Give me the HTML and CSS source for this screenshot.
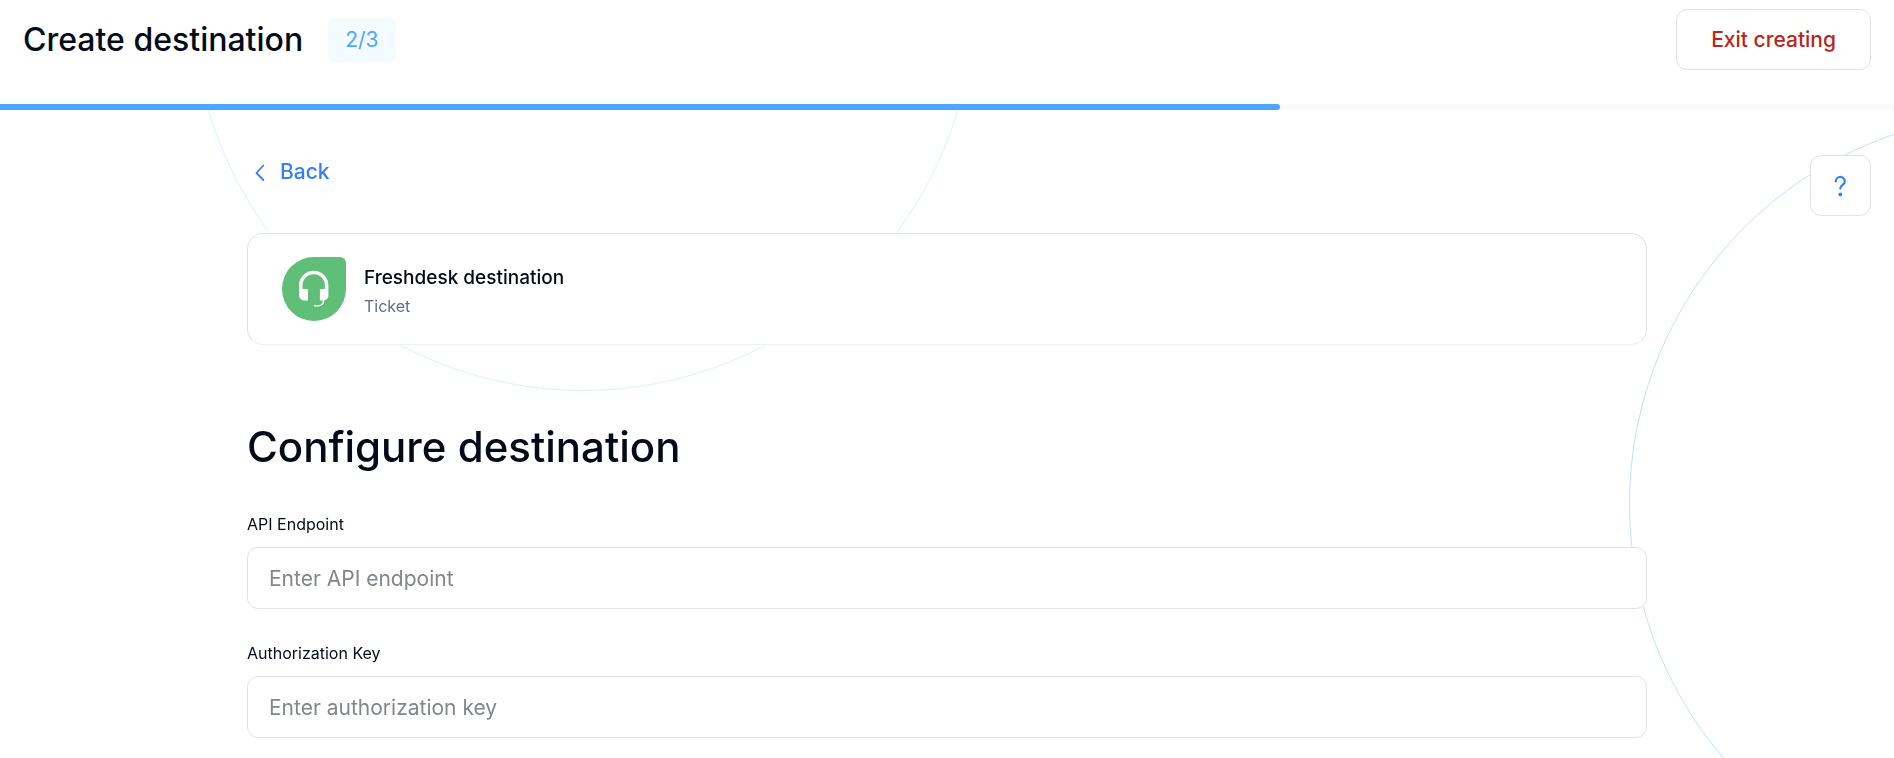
FILE: index.html
```
<!DOCTYPE html>
<html lang="en">
<head>
    <meta charset="UTF-8">
    <meta name="viewport" content="width=device-width, initial-scale=1.0">
    <title>Create destination</title>
    <link rel="stylesheet" href="styles.css">
</head>
<body>
    <header class="topbar">
        <h1>Create destination</h1>
        <span class="step">2/3</span>
        <button type="button" class="btn exit-btn">Exit creating</button>
    </header>
    <div class="progress" role="progressbar" aria-label="Step 2 of 3" aria-valuemin="0" aria-valuemax="3" aria-valuenow="2">
        <div class="progress-bar"></div>
    </div>

    <div class="circle circle-left"></div>
    <div class="circle circle-right"></div>

    <button type="button" class="btn help-btn" aria-label="Help">
        <svg width="24" height="24" viewBox="0 0 24 24" fill="none" stroke="currentColor" stroke-width="2.2" stroke-linecap="round">
            <path d="M6.800 7.400a4.500 4.500 0 0 1 9 0c0 3.200-4.500 3.800-4.500 7.200"/>
            <circle cx="11.300" cy="20.500" r="1.900" fill="currentColor" stroke="none"/>
        </svg>
    </button>

    <main class="container">
        <a href="#" class="back">
            <svg width="10" height="18" viewBox="0 0 10 18" fill="none" stroke="currentColor" stroke-width="1.8" stroke-linecap="round" stroke-linejoin="round">
                <path d="M8.300 2.500 1.500 10l6.800 7"/>
            </svg>
            Back
        </a>

        <section class="card">
            <svg class="logo" width="64" height="64" viewBox="0 0 64 64">
                <path fill="#5fbf78" d="M32 0h26a6 6 0 0 1 6 6v26A32 32 0 1 1 32 0z"/>
                <path fill="#fff" d="M17 28.500a14.700 14.700 0 0 1 29.400 0V38a5.500 5.500 0 0 1-4 5.300c-.3 4-2.400 6.200-6.400 6.200h-3.500a.7.7 0 0 1 0-1.400H36c3 0 4.700-1.500 4.900-4.600h-3V32h5v-3.500a11.200 11.200 0 0 0-22.400 0V32H26v11.500h-3.500A5.500 5.500 0 0 1 17 38z"/>
            </svg>
            <div class="card-text">
                <div class="card-title">Freshdesk destination</div>
                <div class="card-type">Ticket</div>
            </div>
        </section>

        <h2>Configure destination</h2>

        <form>
            <div class="field">
                <label for="api-endpoint">API Endpoint</label>
                <input type="text" id="api-endpoint" placeholder="Enter API endpoint">
            </div>
            <div class="field">
                <label for="auth-key">Authorization Key</label>
                <input type="text" id="auth-key" placeholder="Enter authorization key">
            </div>
        </form>
    </main>
</body>
</html>
```
FILE: styles.css
```
* {
    box-sizing: border-box;
}
body {
    position: relative;
    margin: 0;
    min-height: 100vh;
    overflow-x: hidden;
    background-color: #fff;
    color: #030a1a;
    font-family: Inter, "Liberation Sans", sans-serif;
}
h1, h2 {
    margin: 0;
    font-weight: 500;
}
.topbar {
    position: relative;
    z-index: 2;
    display: flex;
    align-items: center;
    padding: 9px 23px 34px;
    background-color: #fff;
}
h1 {
    font-size: 32px;
    line-height: 40px;
}
.step {
    margin-left: 25px;
    padding: 0 17px;
    border-radius: 6px;
    background-color: #f3fbff;
    color: #4da9fa;
    font-size: 21px;
    line-height: 44px;
}
.btn {
    height: 61px;
    border: 1px solid #e2e3e8;
    border-radius: 11px;
    background-color: #fff;
    font-family: inherit;
    cursor: pointer;
}
.exit-btn {
    margin-left: auto;
    padding: 0 34px;
    color: #b8261c;
    font-size: 21px;
    font-weight: 500;
}
.progress {
    position: relative;
    z-index: 2;
    height: 6px;
    background-color: #f9fafc;
}
.progress-bar {
    width: 67.6%;
    height: 100%;
    border-radius: 0 3px 3px 0;
    background-color: #4da6fa;
}

/* background decoration */
.circle {
    width: 782px;
    height: 782px;
    border: 1px solid #daf1fe;
    border-radius: 50%;
}
.circle-left {
    position: absolute;
    top: -391px;
    left: 192px;
}
.circle-right {
    position: fixed;
    top: 113px;
    right: -517px;
    border-color: #bfe3fc;
}
.help-btn {
    position: absolute;
    z-index: 1;
    top: 155px;
    right: 23px;
    display: flex;
    align-items: center;
    justify-content: center;
    width: 61px;
    padding: 0;
    color: #3580f6;
}

.container {
    position: relative;
    max-width: 1400px;
    margin: 0 auto;
    padding: 48px 0 20px;
}
.back {
    display: inline-flex;
    align-items: center;
    gap: 15px;
    padding-left: 8px;
    color: #3580f6;
    font-size: 21px;
    font-weight: 500;
    line-height: 28px;
    text-decoration: none;
}
.card {
    display: flex;
    align-items: center;
    gap: 18px;
    height: 112px;
    margin-top: 47px;
    padding: 0 34px;
    border: 1px solid #e2e3e8;
    border-bottom-color: #eff1f4;
    border-radius: 16px;
    background-color: #fff;
}
.card-text {
    padding-top: 5px;
}
.card-title {
    font-size: 19px;
    font-weight: 500;
    line-height: 28px;
}
.card-type {
    color: #626c86;
    font-size: 16px;
    line-height: 28px;
}
h2 {
    margin: 74px 0 37px;
    font-size: 42px;
    line-height: 56px;
}
.field {
    margin-bottom: 32px;
}
.field label {
    display: block;
    margin-bottom: 11px;
    font-size: 16px;
    line-height: 24px;
}
.field input {
    display: block;
    width: 100%;
    height: 62px;
    padding: 0 21px;
    border: 1px solid #e2e3e8;
    border-radius: 11px;
    background-color: #fff;
    color: inherit;
    font-family: inherit;
    font-size: 21px;
}
.field input::placeholder {
    color: #84868e;
    opacity: 1;
}
```
